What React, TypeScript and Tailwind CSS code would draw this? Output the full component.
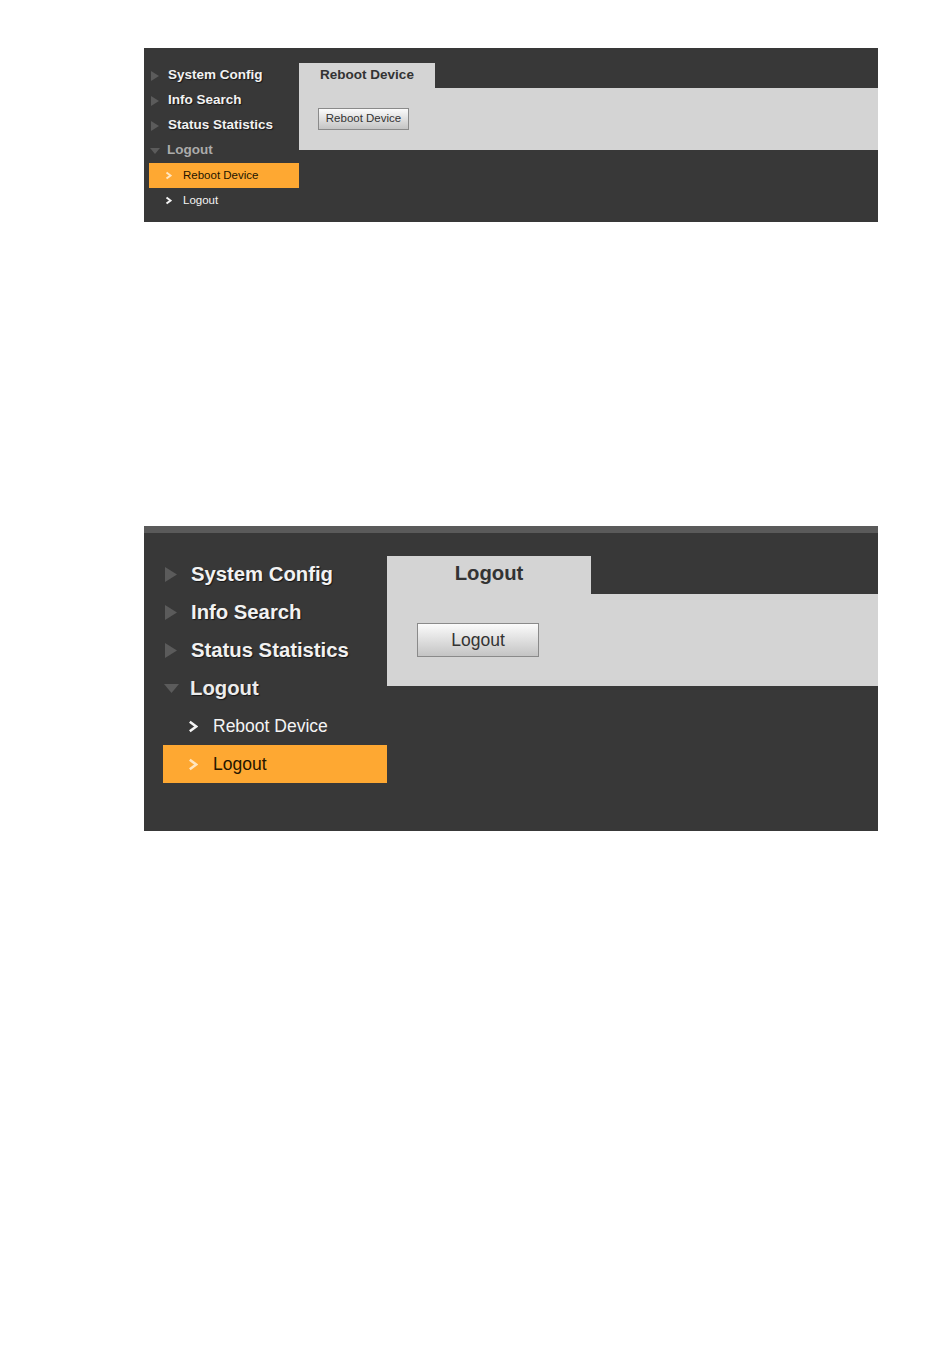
import React from "react";

const font = { fontFamily: '"Liberation Sans", Arial, sans-serif' };

function TriRight({ w, h }: { w: number; h: number }) {
  return (
    <svg width={w} height={h} viewBox={`0 0 ${w} ${h}`} className="shrink-0">
      <polygon points={`0,0 ${w},${h / 2} 0,${h}`} fill="#5b5b5b" />
    </svg>
  );
}
function TriDown({ w, h }: { w: number; h: number }) {
  return (
    <svg width={w} height={h} viewBox={`0 0 ${w} ${h}`} className="shrink-0">
      <polygon points={`0,0 ${w},0 ${w / 2},${h}`} fill="#5b5b5b" />
    </svg>
  );
}
function Chevron({ w, h, color, sw }: { w: number; h: number; color: string; sw: number }) {
  return (
    <svg width={w} height={h} viewBox={`0 0 ${w} ${h}`} className="shrink-0">
      <polyline
        points={`${sw / 2 + 0.5},${sw / 2 + 0.5} ${w - sw / 2 - 0.5},${h / 2} ${sw / 2 + 0.5},${h - sw / 2 - 0.5}`}
        fill="none"
        stroke={color}
        strokeWidth={sw}
      />
    </svg>
  );
}

const shadow = { textShadow: "1px 1px 1px rgba(0,0,0,0.6)" };

function SmallPanel() {
  return (
    <div className="flex w-[734px] bg-[#383838]" style={font}>
      <div className="w-[155px] shrink-0 pt-[15px] pb-[9px]">
        {["System Config", "Info Search", "Status Statistics"].map((t) => (
          <div key={t} className="flex h-[25px] items-center pl-[7px]">
            <TriRight w={8} h={10} />
            <span className="ml-[9px] text-[13.5px] font-bold text-[#f2f2f2]" style={shadow}>
              {t}
            </span>
          </div>
        ))}
        <div className="flex h-[25px] items-center pl-[6px]">
          <TriDown w={10} h={6} />
          <span className="ml-[7px] text-[13.5px] font-bold text-[#ababab]">Logout</span>
        </div>
        <div className="ml-[5px] flex h-[25px] w-[150px] items-center bg-[#fea832] pl-[16px]">
          <Chevron w={7} h={9} color="#ffe6c0" sw={2} />
          <span className="ml-[11px] text-[11.5px] text-[#241500]">Reboot Device</span>
        </div>
        <div className="ml-[5px] flex h-[25px] items-center pl-[16px]">
          <Chevron w={7} h={9} color="#f4f4f4" sw={2} />
          <span className="ml-[11px] text-[11.5px] text-[#f4f4f4]">Logout</span>
        </div>
      </div>
      <div className="flex-1 pt-[15px]">
        <div className="flex h-[25px] w-[136px] items-center justify-center bg-[#d4d4d4]">
          <span className="text-[13.5px] font-bold text-[#333333]">Reboot Device</span>
        </div>
        <div className="h-[62px] bg-[#d4d4d4] pl-[19px] pt-[20px]">
          <div className="flex h-[22px] w-[91px] items-center justify-center border border-[#8a8a8a] bg-gradient-to-b from-[#fbfbfb] to-[#c4c4c4] text-[11.5px] text-[#333333]">
            Reboot Device
          </div>
        </div>
      </div>
    </div>
  );
}

function BigPanel() {
  return (
    <div className="w-[734px] bg-[#383838]" style={font}>
      <div className="h-[7px] bg-[#5a5a5a]" />
      <div className="flex">
        <div className="w-[243px] shrink-0 pt-[22px] pb-[48px]">
          {["System Config", "Info Search", "Status Statistics"].map((t) => (
            <div key={t} className="flex h-[38px] items-center pl-[21px]">
              <TriRight w={12} h={15} />
              <span className="ml-[14px] text-[20.3px] font-bold text-[#f2f2f2]" style={shadow}>
                {t}
              </span>
            </div>
          ))}
          <div className="flex h-[38px] items-center pl-[20px]">
            <TriDown w={15} h={9} />
            <span className="ml-[11px] text-[20.3px] font-bold text-[#ececec]" style={shadow}>
              Logout
            </span>
          </div>
          <div className="ml-[19px] flex h-[38px] items-center pl-[25px]">
            <Chevron w={10} h={13} color="#f4f4f4" sw={2.6} />
            <span className="ml-[15px] text-[17.5px] text-[#f4f4f4]">Reboot Device</span>
          </div>
          <div className="ml-[19px] flex h-[38px] w-[224px] items-center bg-[#fea832] pl-[25px]">
            <Chevron w={10} h={13} color="#ffe6c0" sw={2.6} />
            <span className="ml-[15px] text-[17.5px] text-[#241500]">Logout</span>
          </div>
        </div>
        <div className="flex-1 pt-[23px]">
          <div className="flex h-[38px] w-[204px] items-center justify-center bg-[#d4d4d4] pb-[4px]">
            <span className="text-[20.3px] font-bold text-[#333333]">Logout</span>
          </div>
          <div className="h-[92px] bg-[#d4d4d4] pl-[30px] pt-[29px]">
            <div className="flex h-[34px] w-[122px] items-center justify-center border border-[#8a8a8a] bg-gradient-to-b from-[#fbfbfb] to-[#c4c4c4] text-[17.5px] text-[#333333]">
              Logout
            </div>
          </div>
        </div>
      </div>
    </div>
  );
}

export default function App() {
  return (
    <div className="min-h-[1369px] w-[950px] bg-white pl-[144px] pt-[48px]">
      <SmallPanel />
      <div className="h-[304px]" />
      <BigPanel />
    </div>
  );
}
